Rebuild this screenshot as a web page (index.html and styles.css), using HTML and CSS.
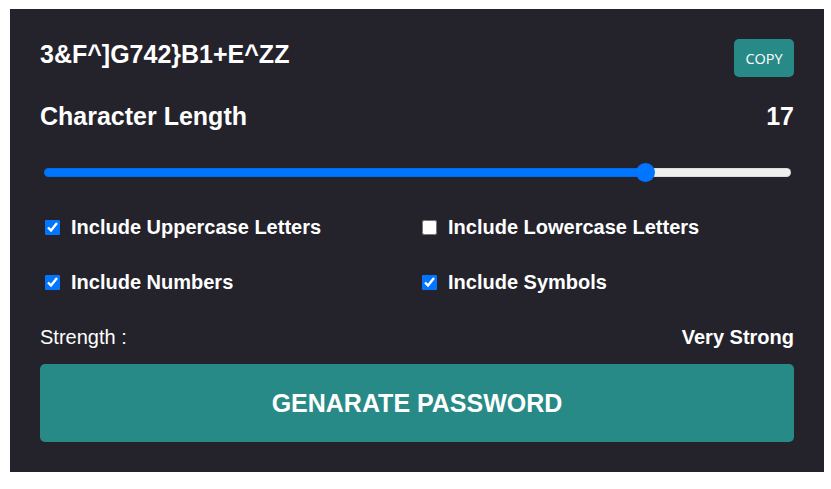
FILE: index.html
```html
<!DOCTYPE html>
<html lang="en">
<head>
<meta charset="utf-8">
<title>Password Generator</title>
<link rel="stylesheet" href="styles.css">
</head>
<body>
<div class="card">
  <div class="header">
    <span class="password">3&amp;F^]G742}B1+E^ZZ</span>
    <button class="copy-btn">COPY</button>
  </div>
  <div class="length-row">
    <span>Character Length</span>
    <span>17</span>
  </div>
  <div class="slider-wrap">
    <input class="slider" type="range" min="4" max="20" value="17" style="background: linear-gradient(to right, #0075ff 0%, #0075ff 80.6%, #efefef 80.6%, #efefef 100%);">
  </div>
  <div class="options">
    <label class="option"><input type="checkbox" checked><span>Include Uppercase Letters</span></label>
    <label class="option"><input type="checkbox"><span>Include Lowercase Letters</span></label>
    <label class="option"><input type="checkbox" checked><span>Include Numbers</span></label>
    <label class="option"><input type="checkbox" checked><span>Include Symbols</span></label>
  </div>
  <div class="strength">
    <span class="strength-label">Strength :</span>
    <span class="strength-value">Very Strong</span>
  </div>
  <button class="generate-btn">GENARATE PASSWORD</button>
</div>
</body>
</html>
```

FILE: styles.css
```css
* { box-sizing: border-box; }
html, body { margin: 0; padding: 0; background: #ffffff; }
body { font-family: "Liberation Sans", Arial, sans-serif; }

.card {
  margin: 9px 0 0 10px;
  width: 814px;
  background: #24232c;
  padding: 30px 30px 30px 30px;
  color: #ffffff;
  display: flex;
  flex-direction: column;
}

.header {
  display: flex;
  justify-content: space-between;
  align-items: flex-start;
  height: 38px;
}
.password {
  font-size: 25px;
  font-weight: bold;
  line-height: 29px;
  margin-top: 1px;
}
.copy-btn {
  width: 60px;
  height: 38px;
  border: none;
  border-radius: 5px;
  background: #288a87;
  color: #ffffff;
  font-family: "Open Sans", sans-serif;
  font-size: 14.5px;
  font-weight: 500;
  padding: 0;
}

.length-row {
  margin-top: 25px;
  display: flex;
  justify-content: space-between;
  font-size: 25px;
  font-weight: bold;
  line-height: 29px;
}

.slider-wrap {
  margin-top: 32px;
  height: 19px;
  display: flex;
  align-items: center;
}
.slider {
  -webkit-appearance: none;
  appearance: none;
  margin: 0 3px 0 4px;
  width: 747px;
  height: 9px;
  border-radius: 5px;
  outline: none;
  box-shadow: inset 0 0 0 1px rgba(0,0,0,0.08);
}
.slider::-webkit-slider-thumb {
  -webkit-appearance: none;
  appearance: none;
  width: 19px;
  height: 19px;
  border-radius: 50%;
  background: #0075ff;
  border: none;
}

.options {
  margin-top: 34px;
  display: grid;
  grid-template-columns: 1fr 1fr;
  grid-auto-rows: 23px;
  row-gap: 32px;
}
.option {
  display: flex;
  align-items: center;
  font-size: 20px;
  font-weight: bold;
  line-height: 23px;
}
.option input {
  width: 15px;
  height: 15px;
  margin: 0 11px 0 5px;
  accent-color: #0075ff;
}

.strength {
  margin-top: 32px;
  display: flex;
  justify-content: space-between;
  font-size: 20px;
  line-height: 23px;
}
.strength-value { font-weight: bold; }

.generate-btn {
  margin-top: 15px;
  height: 78px;
  width: 100%;
  border: none;
  border-radius: 5px;
  background: #288a87;
  color: #ffffff;
  font-family: "Liberation Sans", Arial, sans-serif;
  font-size: 25px;
  font-weight: bold;
  padding: 0;
}
```
